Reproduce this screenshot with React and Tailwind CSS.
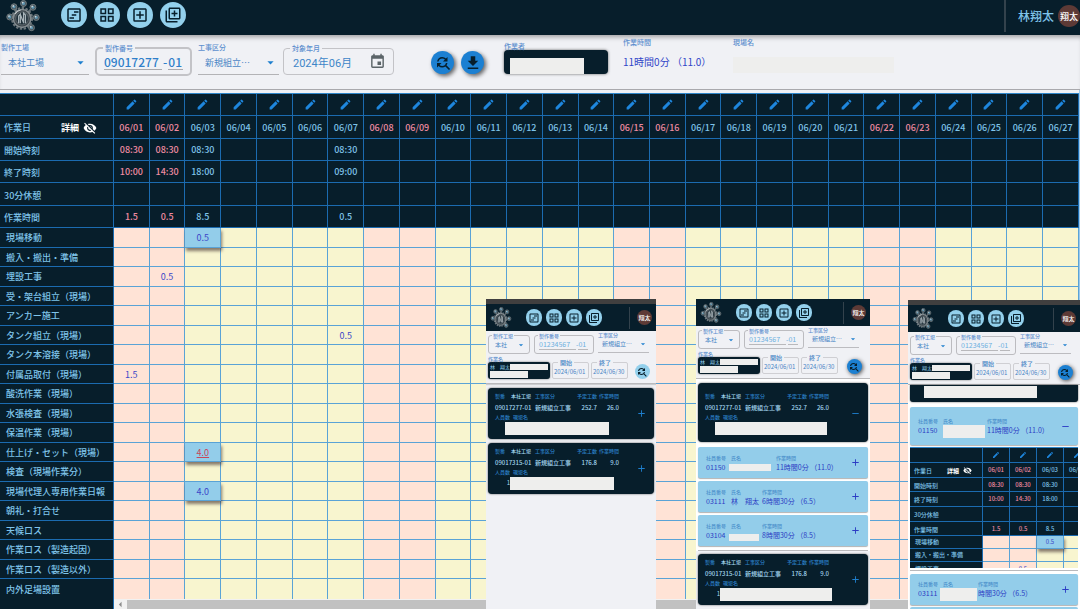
import React from 'react';
import {
  MdOutlineViewTimeline,
  MdOutlineGridView,
  MdOutlineAddBox,
  MdOutlineLibraryAdd,
  MdArrowDropDown,
  MdEvent,
  MdFindReplace,
  MdDownload,
  MdEdit,
  MdVisibilityOff,
  MdAdd,
  MdRemove,
  MdArrowLeft,
} from 'react-icons/md';

const HOLIDAYS = [1, 2, 8, 9, 15, 16, 22, 23];
const DAYS = Array.from({ length: 27 }, (_, i) => i + 1);
const pad = (n) => String(n).padStart(2, '0');

const SUMMARY = [
  { label: '開始時刻', values: { 1: '08:30', 2: '08:30', 3: '08:30', 7: '08:30' } },
  { label: '終了時刻', values: { 1: '10:00', 2: '14:30', 3: '18:00', 7: '09:00' } },
  { label: '30分休憩', values: {} },
  { label: '作業時間', values: { 1: '1.5', 2: '0.5', 3: '8.5', 7: '0.5' } },
];

const TASKS = [
  { label: '現場移動', values: { 3: '0.5' }, marked: true },
  { label: '搬入・搬出・準備' },
  { label: '埋設工事', values: { 2: '0.5' } },
  { label: '受・架台組立（現場）' },
  { label: 'アンカー施工' },
  { label: 'タンク組立（現場）', values: { 7: '0.5' } },
  { label: 'タンク本溶接（現場）' },
  { label: '付属品取付（現場）', values: { 1: '1.5' } },
  { label: '酸洗作業（現場）' },
  { label: '水張検査（現場）' },
  { label: '保温作業（現場）' },
  { label: '仕上げ・セット（現場）', values: { 3: '4.0' }, marked: true, alert: true },
  { label: '検査（現場作業分）' },
  { label: '現場代理人専用作業日報', values: { 3: '4.0' }, marked: true },
  { label: '朝礼・打合せ' },
  { label: '天候ロス' },
  { label: '作業ロス（製造起因）' },
  { label: '作業ロス（製造以外）' },
  { label: '内外足場設置' },
];

const NAV = [
  { name: 'タイムライン', Icon: MdOutlineViewTimeline },
  { name: '一覧', Icon: MdOutlineGridView },
  { name: '追加', Icon: MdOutlineAddBox },
  { name: '複製して追加', Icon: MdOutlineLibraryAdd },
];

function Logo({ className }) {
  const balls = [[23.5, 3.6], [33.5, 7.5], [37, 18], [32, 28.5], [9, 17.5], [13.5, 7]];
  return (
    <svg viewBox="4 0 38 34" preserveAspectRatio="none" className={className} aria-hidden="true">
      <g stroke="#59656b" strokeWidth="2">
        {balls.map(([x, y]) => (
          <line key={`${x}-${y}`} x1="22" y1="18.5" x2={x} y2={y} />
        ))}
      </g>
      <circle cx="22" cy="19" r="10.6" fill="none" stroke="#6a7479" strokeWidth="2.2" strokeDasharray="2.6 1.5" />
      <circle cx="22" cy="19" r="9.2" fill="#3b444a" stroke="#838c90" strokeWidth="1.6" />
      <circle cx="22" cy="19" r="6.8" fill="#22323b" stroke="#535e64" strokeWidth="1.4" />
      <path d="M18.4 24V16.5l1.8-2V24M20.4 15.5l3 7.5M23.6 24V13.5l2 2V24" fill="none" stroke="#a9b4b9" strokeWidth="1.3" />
      <path d="M14.5 14.5a9 9 0 0 1 6-4.2" fill="none" stroke="#c3cacd" strokeWidth="1.2" />
      {balls.map(([x, y]) => (
        <g key={`${x}-${y}`}>
          <circle cx={x} cy={y} r="3.1" fill="#47535a" stroke="#727d82" strokeWidth="1" />
          <circle cx={x} cy={y} r="1.7" fill="#5d93ae" />
          <circle cx={x - 0.8} cy={y - 0.9} r="0.9" fill="#cfd8dc" />
        </g>
      ))}
    </svg>
  );
}

function Redacted({ className }) {
  return <span className={`block bg-[#eeeeed] ${className}`} />;
}

function TimeTable({ compact = false, days }) {
  const headText = compact ? 'text-[6px]' : 'text-[9px]';
  const headRow = compact ? 'h-[15px] nth-[3n]:h-[14px]' : 'h-[22px] nth-[3n+2]:h-[23px]';
  const taskRow = compact ? 'h-[13px]' : 'odd:h-[20px] even:h-[19px]';
  const dark = 'border-r border-b border-[#1b6bb0] bg-[#071e2b] p-0';
  const tone = (d) => (HOLIDAYS.includes(d) ? 'text-[#ee8ba1]' : 'text-[#7fc4ea]');
  return (
    <table
      className={`table-fixed border-separate border-spacing-0 border-t border-[#2f86c9] text-center font-medium ${headText} ${
        compact ? 'w-[181px]' : 'w-full'
      }`}
    >
      <colgroup>
        <col className={compact ? 'w-[73px]' : 'w-[114px]'} />
        {days.map((d) => (
          <col key={d} />
        ))}
      </colgroup>
      <thead>
        <tr className={headRow}>
          <td className={dark} />
          {days.map((d) => (
            <td key={d} className={dark}>
              <button type="button" aria-label={`06/${pad(d)}を編集`} className="block w-full text-[#1e86dd]">
                <MdEdit className={compact ? 'mx-auto size-[8px]' : 'mx-auto size-[13px]'} />
              </button>
            </td>
          ))}
        </tr>
        <tr className={headRow}>
          <th scope="row" className={`${dark} text-left font-medium text-[#7fc4ea]`}>
            <span className={`flex items-center justify-between pt-px ${compact ? 'pr-[10px] pl-[4px]' : 'pr-[16px] pl-[4px]'}`}>
              作業日
              <button type="button" className="flex items-center gap-1 font-bold text-white">
                詳細
                <MdVisibilityOff className={compact ? 'size-[9px]' : 'size-[14px]'} />
              </button>
            </span>
          </th>
          {days.map((d) => (
            <th key={d} scope="col" className={`${dark} font-medium whitespace-nowrap ${tone(d)}`}>{`06/${pad(d)}`}</th>
          ))}
        </tr>
        {SUMMARY.map((row) => (
          <tr key={row.label} className={headRow}>
            <th scope="row" className={`${dark} text-left font-medium text-[#7fc4ea]`}>
              <span className="block pt-[2px] pl-[4px]">{row.label}</span>
            </th>
            {days.map((d) => (
              <td key={d} className={`${dark} ${tone(d)}`}>
                {row.values[d]}
              </td>
            ))}
          </tr>
        ))}
      </thead>
      <tbody>
        {(compact ? TASKS.slice(0, 3) : TASKS).map((row) => (
          <tr key={row.label} className={`${taskRow} group`}>
            <th
              scope="row"
              className={`${dark} text-left font-medium whitespace-nowrap text-[#7fc4ea] group-last:border-b-0`}
            >
              <span className={compact ? 'pl-[5px]' : 'pl-[6px]'}>{row.label}</span>
            </th>
            {days.map((d) => {
              const value = row.values && row.values[d];
              const marked = value && row.marked;
              const bg = marked
                ? 'relative z-10 bg-[#93cdea] shadow-[1px_3px_3px_rgba(60,40,40,0.6)]'
                : HOLIDAYS.includes(d)
                  ? 'bg-[#ffe3d6]'
                  : 'bg-[#f8f5cf]';
              return (
                <td
                  key={d}
                  className={`border-r border-b border-[#5aa3d6] p-0 font-normal group-last:border-b-0 ${bg} ${
                    row.alert ? 'text-[#c9465a] underline' : 'text-[#3c46c8]'
                  }`}
                >
                  {value}
                </td>
              );
            })}
          </tr>
        ))}
      </tbody>
    </table>
  );
}

function SiteSelect({ id, value, wrap, select, arrow }) {
  return (
    <span className={`relative flex items-center ${wrap}`}>
      <select id={id} defaultValue={value} className={`h-full w-full appearance-none bg-transparent text-[#4a86c5] outline-none ${select}`}>
        <option>{value}</option>
      </select>
      <MdArrowDropDown className={`pointer-events-none absolute text-[#1e7fce] ${arrow}`} />
    </span>
  );
}

const topLabel = 'text-[7px] leading-[8px] font-medium text-[#5d8fce]';
const notch = 'absolute left-[6px] -top-[5px] bg-[#f0f1f5] px-[2px] text-[7px] leading-[8px] font-medium text-[#5d8fce]';

function MainFilters() {
  return (
    <form className="flex h-[55px] items-start border-b border-[#a9a9ad] bg-[#f0f1f5] pl-[1px] shadow-[inset_0_5px_5px_-3px_rgba(0,0,0,0.35)]">
      <div className="mt-[8px] w-[88px]">
        <label htmlFor="factory" className={`block ${topLabel}`}>製作工場</label>
        <SiteSelect id="factory" value="本社工場" wrap="h-[24px] border-b border-[#b3b3b6]" select="pl-[7px] text-[9px]" arrow="right-[1px] size-[15px]" />
      </div>
      <div className="relative mt-[12px] ml-[6px] flex h-[29px] w-[97px] items-center rounded-[5px] border-2 border-[#c3c3c7] pl-[7px] text-[12px] font-medium text-[#2f7fca]">
        <label htmlFor="number" className={notch}>製作番号</label>
        <input id="number" defaultValue="09017277" className="h-[16px] w-[58px] border-b border-[#a9a9ad] bg-transparent outline-none" />
        <span className="px-[1px]">-</span>
        <input aria-label="枝番" defaultValue="01" className="h-[16px] w-[15px] border-b border-[#a9a9ad] bg-transparent outline-none" />
      </div>
      <div className="mt-[8px] ml-[6px] w-[81px]">
        <label htmlFor="kind" className={`block ${topLabel}`}>工事区分</label>
        <SiteSelect id="kind" value="新規組立…" wrap="h-[24px] border-b border-[#b3b3b6]" select="pl-[7px] text-[9px]" arrow="right-[1px] size-[15px]" />
      </div>
      <div className="relative mt-[13px] ml-[4px] flex h-[27px] w-[111px] items-center justify-between rounded-[4px] border border-[#c3c3c7] pr-[7px] pl-[9px]">
        <label htmlFor="month" className={notch}>対象年月</label>
        <input id="month" defaultValue="2024年06月" className="w-[64px] bg-transparent [font-family:Roboto,'Noto_Sans_CJK_JP',sans-serif] text-[11px] text-[#3e86c8] outline-none" />
        <button type="button" aria-label="カレンダーを開く" className="text-[#5b6468]">
          <MdEvent className="size-[17px]" />
        </button>
      </div>
      <div className="mt-[16px] ml-[37px] flex gap-[7px]">
        <button type="submit" aria-label="再検索" className="grid size-[23px] place-items-center rounded-full bg-[#1c80d2] text-[#071e2b] shadow-[2px_2px_4px_rgba(0,0,0,0.6)]">
          <MdFindReplace className="size-[18px]" />
        </button>
        <button type="button" aria-label="ダウンロード" className="grid size-[23px] place-items-center rounded-full bg-[#1c80d2] text-[#071e2b] shadow-[2px_2px_4px_rgba(0,0,0,0.6)]">
          <MdDownload className="size-[18px]" />
        </button>
      </div>
      <div className="mt-[7px] ml-[20px] w-[104px]">
        <span id="worker" className={`block ${topLabel}`}>作業者</span>
        <button type="button" aria-labelledby="worker" className="flex h-[24px] w-full items-end rounded-[4px] bg-[#071e2b] pl-[6px] shadow-[0_0_3px_rgba(0,0,0,0.6)]">
          <Redacted className="h-[16px] w-[74px]" />
        </button>
      </div>
      <dl className="flex">
        <div className="mt-[3px] ml-[15px] w-[110px]">
          <dt className={topLabel}>作業時間</dt>
          <dd className="mt-[8px] text-[10px] leading-[16px] text-[#3046c8]">11時間0分 （11.0）</dd>
        </div>
        <div className="mt-[3px]">
          <dt className={topLabel}>現場名</dt>
          <dd className="mt-[11px]"><Redacted className="h-[16px] w-[161px]" /></dd>
        </div>
      </dl>
    </form>
  );
}

const miniNotch = 'absolute -top-[3px] left-[3px] bg-[#f0f1f5] px-px text-[5px] leading-[5px] font-medium text-[#5d8fce]';

function MobilePanel({ id, strip, activeSearch, className, children }) {
  return (
    <section className={`absolute z-20 flex flex-col overflow-hidden bg-[#f0f1f5] ${className}`}>
      {strip && <div className="h-[5px] shrink-0 bg-[#403f3f]" />}
      <header className="flex h-[27px] shrink-0 items-center bg-[#071e2b] pl-[4px] text-[#071e2b]">
        <Logo className="h-[22px] w-[22px]" />
        <nav className="ml-[14px] flex gap-[4px]">
          {NAV.map(({ name, Icon }) => (
            <button key={name} type="button" aria-label={name} className="grid h-[17px] w-[16px] place-items-center rounded-full bg-[#93d0ec]">
              <Icon className="size-[12px]" />
            </button>
          ))}
        </nav>
        <div className="ml-auto flex h-[22px] items-center border-l border-[#33424c] pr-[4px] pl-[7px]">
          <span className="grid size-[15px] place-items-center rounded-full bg-[#5d3a36] text-[6px] font-medium text-white">翔太</span>
        </div>
      </header>
      <form className="h-[53px] shrink-0 border-b border-[#b9b9bc] px-[2px] pt-[4px] shadow-[0_1px_1px_rgba(0,0,0,0.15)]">
        <div className="flex gap-[4px] text-[#4a86c5]">
          <div className="relative h-[19px] w-[42px] rounded-[3px] border border-[#bcbcc0]">
            <label htmlFor={`${id}-factory`} className={miniNotch}>製作工場</label>
            <SiteSelect id={`${id}-factory`} value="本社" wrap="h-full" select="pl-[6px] text-[6px]" arrow="right-[3px] size-[10px]" />
          </div>
          <div className="relative flex h-[19px] w-[60px] items-center rounded-[3px] border border-[#bcbcc0] pl-[4px] text-[7px] text-[#6cb0e0]">
            <label htmlFor={`${id}-number`} className={miniNotch}>製作番号</label>
            <input id={`${id}-number`} defaultValue="01234567" className="h-[10px] w-[37px] border-b border-[#b9b9bc] bg-transparent outline-none" />
            <span>-</span>
            <input aria-label="枝番" defaultValue="01" className="h-[10px] w-[10px] border-b border-[#b9b9bc] bg-transparent outline-none" />
          </div>
          <div className="relative h-[18px] w-[51px] border-b border-[#bcbcc0]">
            <label htmlFor={`${id}-kind`} className="absolute -top-[3px] left-0 text-[5px] leading-[5px] font-medium text-[#5d8fce]">工事区分</label>
            <SiteSelect id={`${id}-kind`} value="新規組立…" wrap="h-full" select="pl-[4px] text-[6px]" arrow="right-[1px] size-[10px]" />
          </div>
        </div>
        <div className="mt-[2px] flex items-end gap-[2px]">
          <div className="w-[62px]">
            <span id={`${id}-worker`} className="block text-[5px] leading-[6px] font-medium text-[#5d8fce]">作業名</span>
            <button type="button" aria-labelledby={`${id}-worker`} className="block h-[17px] w-full rounded-[3px] bg-[#071e2b] px-[2px] pt-px text-left shadow-[0_0_2px_rgba(0,0,0,0.6)]">
              <span className="flex items-center text-[5px] leading-[6px] text-[#8fcbea]">
                <span className="w-[20px] whitespace-nowrap">林　翔太,</span>
                <Redacted className="h-[6px] flex-1" />
              </span>
              <Redacted className="mt-px h-[7px] w-[38px]" />
            </button>
          </div>
          {[['start', '開始', '2024/06/01'], ['end', '終了', '2024/06/30']].map(([key, label, value]) => (
            <div key={key} className="relative h-[17px] w-[37px] rounded-[2px] border border-[#cfcfd3]">
              <label htmlFor={`${id}-${key}`} className="absolute -top-[3px] left-[5px] bg-[#f0f1f5] px-[2px] text-[6px] leading-[6px] font-medium text-[#4a86c5]">{label}</label>
              <input id={`${id}-${key}`} defaultValue={value} className="block h-full w-full bg-transparent pt-[2px] pl-px text-[6px] text-[#4a86c5] outline-none" />
            </div>
          ))}
          <div className="flex flex-1 justify-center">
            <button
              type="submit"
              aria-label="再検索"
              className={`grid size-[15px] place-items-center rounded-full text-[#071e2b] ${
                activeSearch ? 'bg-[#1c80d2] shadow-[1px_1px_4px_rgba(0,0,0,0.7)]' : 'bg-[#93d0ec]'
              }`}
            >
              <MdFindReplace className="size-[12px]" />
            </button>
          </div>
        </div>
      </form>
      {children}
    </section>
  );
}

function JobCard({ number, planned, worked, open, count, bar, className }) {
  const Icon = open ? MdRemove : MdAdd;
  return (
    <article className={`flex shrink-0 items-center justify-between rounded-[4px] bg-[#071e2b] pr-[7px] pl-[7px] shadow-[0_0_2px_rgba(0,0,0,0.7)] ${className}`}>
      <div>
        <div className="grid grid-cols-[40px_41px_21px_22px] text-[5px] leading-[8px] font-medium whitespace-nowrap text-[#2b7fc6]">
          <span className="flex gap-[6px]">製番<span className="text-[#a5d8f2]">本社工場</span></span>
          <span>工事区分</span>
          <span className="text-right">予定工数</span>
          <span className="text-right">作業時間</span>
        </div>
        <div className="grid grid-cols-[40px_41px_21px_22px] pt-[3px] text-[6px] leading-[10px] font-medium whitespace-nowrap text-[#a5d8f2]">
          <span>{number}</span>
          <span>新規組立工事</span>
          <span className="text-right">{planned}</span>
          <span className="text-right">{worked}</span>
        </div>
        <div className="flex gap-[3px] text-[5px] leading-[8px] font-medium text-[#2b7fc6]">
          <span>人員数</span>
          <span>現場名</span>
        </div>
        <div className="flex pt-px text-[6px] leading-[12px] text-[#a5d8f2]">
          <span className={count ? 'w-[15px] text-right' : 'w-[10px]'}>{count}</span>
          <Redacted className={`h-[13px] ${bar}`} />
        </div>
      </div>
      <button type="button" aria-label={open ? '閉じる' : '開く'} className="text-[#1e7fce]">
        <Icon className="size-[11px]" />
      </button>
    </article>
  );
}

function WorkerCard({ code, name, hours, nameCol, open, className }) {
  const Icon = open ? MdRemove : MdAdd;
  return (
    <article className={`flex shrink-0 items-center justify-between rounded-[2px] bg-[#93cdea] pr-[7px] pl-[8px] shadow-[0_1px_1px_rgba(0,0,0,0.3)] ${className}`}>
      <dl className="flex pt-px text-[7px] leading-[11px] whitespace-nowrap text-[#2c3cc4]">
        <div className="w-[25px]">
          <dt className="text-[5px] leading-[9px] font-medium text-[#4a8fcb]">社員番号</dt>
          <dd>{code}</dd>
        </div>
        <div className={nameCol}>
          <dt className="text-[5px] leading-[9px] font-medium text-[#4a8fcb]">氏名</dt>
          <dd>{name}</dd>
        </div>
        <div>
          <dt className="text-[5px] leading-[9px] font-medium text-[#4a8fcb]">作業時間</dt>
          <dd>{hours}</dd>
        </div>
      </dl>
      <button type="button" aria-label={open ? '閉じる' : '開く'} className="text-[#2c3cc4]">
        <Icon className="size-[11px]" />
      </button>
    </article>
  );
}

export default function App() {
  return (
    <div className="relative min-h-screen overflow-hidden bg-[#f0f1f5] [font-family:'Noto_Sans_CJK_JP',sans-serif] leading-none">
      <header className="flex h-[35px] items-start bg-[#071e2b] pl-[5px] text-[#071e2b]">
        <Logo className="h-[33px] w-[36px]" />
        <nav className="mt-[2px] ml-[20px] flex gap-[7px]">
          {NAV.map(({ name, Icon }) => (
            <button key={name} type="button" aria-label={name} className="grid size-[26px] place-items-center rounded-full bg-[#93d0ec]">
              <Icon className="size-[18px]" />
            </button>
          ))}
        </nav>
        <div className="ml-auto flex h-[32px] items-center gap-[4px] border-l-2 border-[#33424c] pl-[12px]">
          <span className="text-[12px] font-medium text-[#7fc4ea]">林翔太</span>
          <span className="grid size-[22px] place-items-center rounded-full bg-[#5d3a36] text-[9px] font-medium text-white">翔太</span>
        </div>
      </header>

      <MainFilters />

      <main className="border-r border-[#9cc9ec] pt-[3px]">
        <TimeTable days={DAYS} />
        <div className="flex h-[10px] bg-[#f1f1f1]">
          <div className="w-[114px] border-r border-[#1b6bb0] bg-[#071e2b]" />
          <div className="flex w-[13px] items-center justify-center text-[#8b8b8b]">
            <MdArrowLeft className="size-[13px]" />
          </div>
          <div className="mt-[1px] flex-1 bg-[#c1c1c1]" />
        </div>
      </main>

      <MobilePanel id="p1" strip className="top-[299px] bottom-0 left-[486px] w-[170px]">
        <div className="flex flex-col gap-[4px] px-[2px] pt-[4px]">
          <JobCard number="09017277-01" planned="252.7" worked="26.0" bar="w-[104px]" className="h-[51px]" />
          <JobCard number="09017315-01" planned="176.8" worked="9.0" count="1" bar="w-[104px]" className="h-[51px]" />
        </div>
      </MobilePanel>

      <MobilePanel id="p2" activeSearch className="top-[299px] bottom-0 left-[696px] w-[174px]">
        <div className="flex flex-col bg-white px-[2px] pt-[4px]">
          <JobCard number="09017277-01" planned="252.7" worked="26.0" open bar="w-[112px]" className="h-[59px] pt-[2px]" />
          <div className="flex flex-col gap-[3px] border-b border-[#b9b9bc] pt-[5px] pb-[4px]">
            <WorkerCard code="01150" name={<Redacted className="mt-[2px] -ml-[2px] h-[7px] w-[42px]" />} nameCol="w-[45px]" hours="11時間0分 （11.0）" className="h-[31px]" />
            <WorkerCard code="03111" name="林　翔太" nameCol="w-[31px]" hours="6時間30分 （6.5）" className="h-[31px]" />
            <WorkerCard code="03104" name={<Redacted className="mt-[4px] -ml-[2px] h-[7px] w-[30px]" />} nameCol="w-[31px]" hours="8時間30分 （8.5）" className="h-[31px]" />
          </div>
        </div>
        <div className="flex flex-col px-[2px] pt-[3px]">
          <JobCard number="09017315-01" planned="176.8" worked="9.0" count="1" bar="w-[112px]" className="h-[51px]" />
        </div>
      </MobilePanel>

      <MobilePanel id="p3" strip activeSearch className="top-[300px] right-0 bottom-0 w-[172px]">
        <div className="flex flex-col bg-white px-[2px]">
          <div className="h-[17px] shrink-0 rounded-b-[3px] bg-[#071e2b] pt-px pl-[14px] shadow-[0_0_2px_rgba(0,0,0,0.7)]">
            <Redacted className="h-[12px] w-[113px]" />
          </div>
          <WorkerCard code="01150" name={<Redacted className="h-[13px] w-[42px]" />} nameCol="w-[44px]" hours="11時間0分 （11.0）" open className="mt-[5px] h-[38px]" />
          <div className="mt-[2px] h-[121px] shrink-0 overflow-hidden">
            <TimeTable compact days={[1, 2, 3, 4]} />
          </div>
          <div className="mt-[2px] border-t border-[#b9b9bc] pt-[3px]">
            <WorkerCard code="03111" name={<Redacted className="-ml-[3px] h-[13px] w-[37px]" />} nameCol="w-[35px]" hours="時間30分 （6.5）" className="h-[31px]" />
          </div>
          <div className="mt-[2px] h-[6px] rounded-t-[2px] bg-[#93cdea]" />
        </div>
      </MobilePanel>
    </div>
  );
}
